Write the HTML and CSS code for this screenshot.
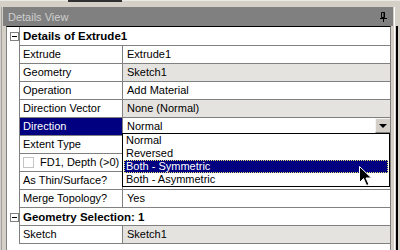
FILE: index.html
```html
<!DOCTYPE html>
<html lang="en">
<head>
  <meta charset="UTF-8">
  <title>Details View</title>
  <link rel="stylesheet" href="styles.css">
</head>
<body>

  <div class="top"><div class="tab"></div></div>

  <div class="main">
    <div class="panel">

      <!-- Title bar -->
      <div class="title">
        <span>Details View</span>
        <svg class="pin" width="7" height="10" viewBox="0 0 7 10">
          <path d="M1.5 0.5h3v5h-3z" fill="none" stroke="#000"/>
          <path d="M4 0v6" stroke="#000"/>
          <path d="M0 6.5h7" stroke="#000"/>
          <path d="M3.5 7v3" stroke="#000"/>
        </svg>
      </div>

      <!-- Property grid -->
      <div class="grid">
        <div class="row group first">
          <div class="exp"><span class="box"></span></div>
          <div class="cell head">Details of Extrude1</div>
        </div>
        <div class="row">
          <div class="exp"></div>
          <div class="cell name">Extrude</div>
          <div class="cell val">Extrude1</div>
        </div>
        <div class="row">
          <div class="exp"></div>
          <div class="cell name">Geometry</div>
          <div class="cell val ro">Sketch1</div>
        </div>
        <div class="row">
          <div class="exp"></div>
          <div class="cell name">Operation</div>
          <div class="cell val">Add Material</div>
        </div>
        <div class="row">
          <div class="exp"></div>
          <div class="cell name">Direction Vector</div>
          <div class="cell val ro">None (Normal)</div>
        </div>
        <div class="row">
          <div class="exp"></div>
          <div class="cell name selected">Direction</div>
          <div class="cell val combo">
            <span>Normal</span>
            <span class="arrow"></span>
            <!-- Open dropdown -->
            <div class="list">
              <div class="item">Normal</div>
              <div class="item">Reversed</div>
              <div class="item active">Both - Symmetric</div>
              <div class="item">Both - Asymmetric</div>
            </div>
          </div>
        </div>
        <div class="row">
          <div class="exp"></div>
          <div class="cell name">Extent Type</div>
          <div class="cell val"></div>
        </div>
        <div class="row">
          <div class="exp"></div>
          <div class="cell name check"><span class="cb"></span>FD1, Depth (&gt;0)</div>
          <div class="cell val"></div>
        </div>
        <div class="row">
          <div class="exp"></div>
          <div class="cell name">As Thin/Surface?</div>
          <div class="cell val"></div>
        </div>
        <div class="row">
          <div class="exp"></div>
          <div class="cell name">Merge Topology?</div>
          <div class="cell val">Yes</div>
        </div>
        <div class="row group">
          <div class="exp"><span class="box"></span></div>
          <div class="cell head">Geometry Selection: 1</div>
        </div>
        <div class="row">
          <div class="exp"></div>
          <div class="cell name">Sketch</div>
          <div class="cell val ro">Sketch1</div>
        </div>
      </div>

    </div>
    <div class="side"></div>
  </div>

  <!-- Mouse pointer -->
  <svg class="cursor" width="13" height="21" viewBox="0 0 13 21">
    <path d="M0.5 0.5v16l4-4 3 7 2.5-1-3-6.5h5.5z" fill="#000" stroke="#fff"/>
  </svg>

</body>
</html>
```

FILE: styles.css
```css
body {
  margin: 0;
  width: 400px;
  height: 250px;
  overflow: hidden;
  background-color: #d4d0c8;
  font-family: "Liberation Sans", Arial, sans-serif;
  font-size: 11px;
  color: #000;
  position: relative;
}
.top {
  height: 7px;
  border-top: 1px solid #ece9e4;
  box-sizing: border-box;
}
.tab {
  margin-left: 68px;
  width: 54px;
  height: 2px;
  background-color: #303030;
  margin-top: -1px;
}
.main {
  display: flex;
  height: 243px;
  margin-left: 1px;
  border-left: 1px solid #a0a0a0;
}
.panel {
  width: 390px;
  margin-left: 1px;
  display: flex;
  flex-direction: column;
}
/* Title bar */
.title {
  height: 19px;
  background-color: #808080;
  color: #cfcfcf;
  display: flex;
  align-items: center;
  justify-content: space-between;
  padding: 0 6px 0 5px;
}
.pin {
  display: block;
}
.side {
  flex: 1;
  margin-left: 1px;
  border-left: 1px solid #fff;
  position: relative;
}
.side::after {
  content: "";
  position: absolute;
  left: 1px;
  top: 19px;
  bottom: 0;
  width: 2px;
  background-color: #000;
}
/* Property grid */
.grid {
  flex: 1;
  margin-left: 3px;
  margin-right: 2px;
  background-color: #fff;
  border-top: 1px solid #000;
  border-left: 1px solid #808080;
  border-right: 1px solid #808080;
}
.row {
  display: grid;
  grid-template-columns: 13px 103px 1fr;
  height: 18px;
}
.row.first {
  height: 19px;
}
.exp {
  border-right: 1px solid #808080;
  display: flex;
  align-items: center;
  justify-content: center;
}
.box {
  width: 9px;
  height: 9px;
  box-sizing: border-box;
  border: 1px solid #808080;
  background-color: #fff;
  position: relative;
  margin-left: 2px;
}
.box::after {
  content: "";
  position: absolute;
  left: 1px;
  top: 3px;
  width: 5px;
  height: 1px;
  background-color: #000;
}
.cell {
  border-bottom: 1px solid #808080;
  line-height: 17px;
  white-space: nowrap;
  overflow: hidden;
}
.name {
  border-right: 1px solid #808080;
  padding-left: 3px;
}
.val {
  padding-left: 4px;
}
.ro {
  background-color: #e5e3df;
}
.head {
  grid-column: span 2;
  font-weight: bold;
  font-size: 11.5px;
  padding-left: 3px;
  line-height: 18px;
}
.selected {
  background-color: #000080;
  color: #fff;
}
.check {
  display: flex;
  align-items: center;
}
.cb {
  width: 11px;
  height: 11px;
  box-sizing: border-box;
  border: 1px solid #c4c4c4;
  background-color: #fff;
  margin-right: 6px;
}
/* Combo box */
.combo {
  position: relative;
  overflow: visible;
}
.arrow {
  position: absolute;
  right: 0;
  top: 0;
  width: 15px;
  height: 15px;
  box-sizing: border-box;
  background-color: #d4d0c8;
  border-top: 1px solid #f4f4f4;
  border-left: 1px solid #f4f4f4;
  border-bottom: 1px solid #808080;
}
.arrow::after {
  content: "";
  position: absolute;
  left: 3px;
  top: 5px;
  border-left: 4px solid transparent;
  border-right: 4px solid transparent;
  border-top: 4px solid #000;
}
.list {
  position: absolute;
  left: -1px;
  right: 0;
  top: 15px;
  background-color: #fff;
  border: 1px solid #000;
  z-index: 10;
  line-height: 13px;
}
.item {
  height: 13px;
  padding-left: 3px;
  box-sizing: border-box;
}
.item.active {
  margin: 0 1px;
  padding-left: 2px;
  background-color: #000080;
  color: #fff;
  outline: 1px dotted #e8e070;
  outline-offset: -1px;
}
.cursor {
  position: absolute;
  left: 359px;
  top: 166px;
  z-index: 20;
}
```
